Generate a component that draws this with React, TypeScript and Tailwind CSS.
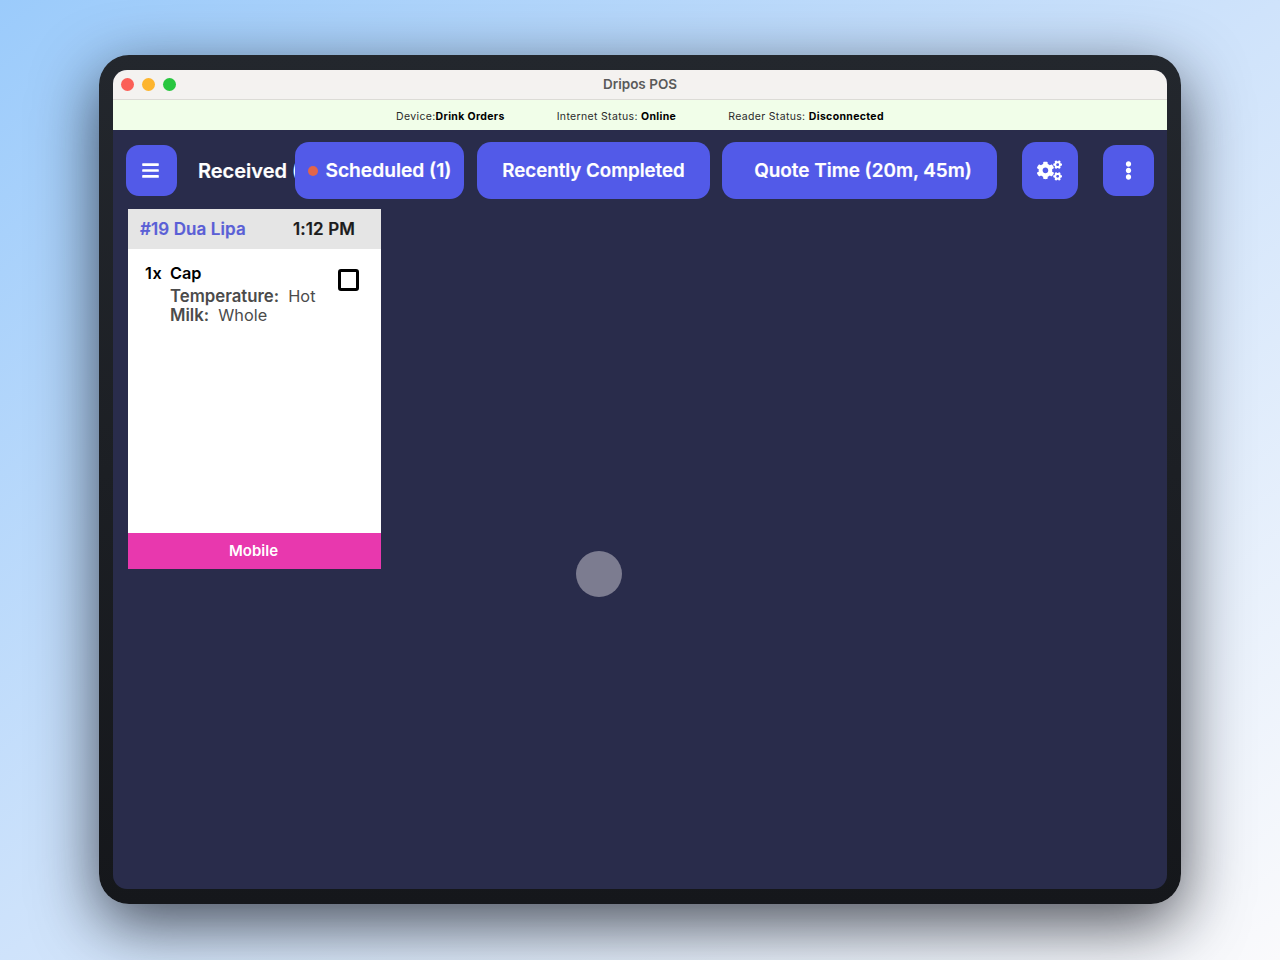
import { FaBars, FaCogs, FaEllipsisV } from 'react-icons/fa';

function ActionButton({ label, className }: { label: string; className: string }) {
  return (
    <button className={`flex h-[57px] shrink-0 items-center justify-center rounded-[14px] bg-[#525ae8] pt-[1px] font-semibold text-white [-webkit-text-stroke:0.2px_white] ${className}`}>
      {label}
    </button>
  );
}

export default function App() {
  return (
    <div className="h-[960px] w-[1280px] overflow-hidden bg-gradient-to-br from-[#9bcbfb] via-[#cfe3fb] to-[#fafafc] pl-[99px] pt-[55px] [font-family:Inter,'Liberation_Sans',sans-serif]">
      <div className="h-[849px] w-[1082px] rounded-[30px] bg-gradient-to-b from-[#23272d] to-[#15171b] pb-[15px] pl-[14px] pr-[14px] pt-[15px] shadow-[0_20px_64px_rgba(10,12,20,0.7)]">
        <div className="relative flex h-[819px] w-[1054px] flex-col overflow-hidden rounded-[14px] bg-[#292c4b]">
          {/* Title bar */}
          <div className="relative flex h-[30px] shrink-0 items-center justify-center border-b border-[#dcdbd6] bg-[#f4f2f0] text-[13.5px] font-semibold text-[#5a5a5a]">
            <div className="absolute left-[8px] top-[8px] flex gap-[8px]">
              <span className="h-[13px] w-[13px] rounded-full bg-[#fb5f57]" />
              <span className="h-[13px] w-[13px] rounded-full bg-[#fdb52e]" />
              <span className="h-[13px] w-[13px] rounded-full bg-[#28c63f]" />
            </div>
            Dripos POS
          </div>

          {/* Status strip */}
          <div className="flex h-[30px] shrink-0 items-center justify-center gap-[52px] bg-[#f1fee9] pt-[3px] text-[10.5px] tracking-[0.34px] text-[#2b2b2b]">
            <span>
              Device:<b className="font-bold text-black">Drink Orders</b>
            </span>
            <span>
              Internet Status: <b className="font-bold text-black">Online</b>
            </span>
            <span>
              Reader Status: <b className="font-bold text-black">Disconnected</b>
            </span>
          </div>

          {/* Toolbar */}
          <div className="flex items-center pl-[13px] pt-[12px]">
            <button className="flex h-[51px] w-[51px] shrink-0 items-center justify-center rounded-[13px] bg-[#525ae8] pr-[2px] text-white">
              <FaBars size={19} />
            </button>
            <div className="ml-[21px] w-[97px] shrink-0 whitespace-nowrap text-[20px] font-semibold text-white [-webkit-text-stroke:0.2px_white]">
              Received (1)
            </div>
            <div className="relative">
              <ActionButton label="Scheduled (1)" className="w-[169px] pb-[2px] pl-[18px] text-[19.2px]" />
              <span className="absolute left-[13px] top-[24px] h-[10px] w-[10px] rounded-full bg-[#e2654a]" />
            </div>
            <ActionButton label="Recently Completed" className="ml-[13px] w-[233px] text-[18.7px]" />
            <ActionButton label="Quote Time (20m, 45m)" className="ml-[12px] w-[275px] pl-[7px] text-[18.9px]" />
            <button className="ml-[25px] flex h-[57px] w-[56px] shrink-0 items-center justify-center rounded-[14px] bg-[#525ae8] pr-[2px] text-white">
              <FaCogs size={25} />
            </button>
            <button className="ml-[25px] flex h-[51px] w-[51px] shrink-0 items-center justify-center rounded-[13px] bg-[#525ae8] text-white">
              <FaEllipsisV size={19} />
            </button>
          </div>

          {/* Ticket */}
          <div className="ml-[15px] mt-[10px] flex h-[360px] w-[253px] flex-col bg-white">
            <div className="flex h-[40px] shrink-0 items-center bg-[#e5e5e5] pl-[12px] pt-[2px] text-[17px] font-semibold tracking-[0.1px] [-webkit-text-stroke:0.2px_currentColor]">
              <span className="w-[153px] text-[#5a5fd6]">#19 Dua Lipa</span>
              <span className="text-[#1c1c1c]">1:12 PM</span>
            </div>
            <div className="flex flex-1 items-start pl-[17px] pr-[22px] pt-[14px] text-[16.3px] leading-[20px]">
              <span className="w-[25px] shrink-0 font-semibold tracking-[0.6px] text-black">1x</span>
              <div className="flex-1">
                <div className="font-semibold text-black">Cap</div>
                <div className="mt-[3px] text-[#4b4b4b]">
                  <span className="text-[16.8px] font-semibold">Temperature:</span>&nbsp; Hot
                </div>
                <div className="-mt-[1px] text-[#4b4b4b]">
                  <span className="text-[16.8px] font-semibold">Milk:</span>&nbsp; Whole
                </div>
              </div>
              <span className="mt-[6px] h-[22px] w-[21px] shrink-0 rounded-[3px] border-[3px] border-black" />
            </div>
            <div className="flex h-[36px] shrink-0 items-center justify-center bg-[#e838ae] pr-[2px] pt-[1px] text-[15px] font-semibold text-white">
              Mobile
            </div>
          </div>

          {/* Floating touch */}
          <div className="absolute left-[463px] top-[481px] h-[46px] w-[46px] rounded-full bg-[#7c7c90]" />
        </div>
      </div>
    </div>
  );
}
